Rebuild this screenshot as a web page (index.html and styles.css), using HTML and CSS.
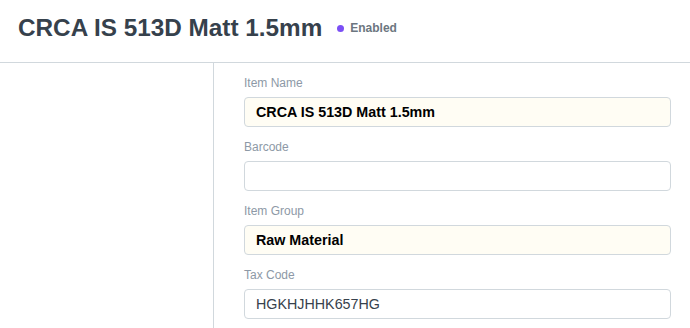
FILE: index.html
```html
<!DOCTYPE html>
<html>
<head>
<meta charset="utf-8">
<link rel="stylesheet" href="styles.css">
</head>
<body>
<header class="page-head">
  <h1 class="title">CRCA IS 513D Matt 1.5mm</h1>
  <span class="indicator"><span class="dot"></span>Enabled</span>
</header>
<main class="layout">
  <aside class="sidebar"></aside>
  <section class="form">
    <div class="field">
      <label class="label">Item Name</label>
      <div class="control filled bold">CRCA IS 513D Matt 1.5mm</div>
    </div>
    <div class="field">
      <label class="label">Barcode</label>
      <div class="control"></div>
    </div>
    <div class="field">
      <label class="label">Item Group</label>
      <div class="control filled bold">Raw Material</div>
    </div>
    <div class="field">
      <label class="label">Tax Code</label>
      <div class="control">HGKHJHHK657HG</div>
    </div>
  </section>
</main>
</body>
</html>
```
FILE: styles.css
```css
* { box-sizing: border-box; }
html, body {
  margin: 0;
  background: #ffffff;
  font-family: "Liberation Sans", Arial, sans-serif;
}
.page-head {
  display: flex;
  align-items: center;
  padding: 12px 18px 18px;
  border-bottom: 1px solid #d1d8dd;
  height: 63px;
}
.title {
  margin: 0;
  font-size: 24.3px;
  line-height: 32px;
  font-weight: 700;
  color: #36414c;
}
.indicator {
  display: inline-flex;
  align-items: center;
  margin-left: 15px;
  font-size: 12px;
  font-weight: 700;
  color: #6c7680;
}
.dot {
  width: 7px;
  height: 7px;
  border-radius: 50%;
  background: #7b4ff5;
  margin-right: 6px;
}
.layout {
  display: grid;
  grid-template-columns: 214px 1fr;
  height: 265px;
}
.sidebar {
  border-right: 1px solid #d1d8dd;
}
.form {
  padding: 11px 19px 0 30px;
}
.field {
  margin-bottom: 11px;
}
.label {
  display: block;
  font-size: 12px;
  line-height: 18px;
  color: #8d99a6;
  margin-bottom: 5px;
}
.control {
  height: 30px;
  border: 1px solid #d1d8dd;
  border-radius: 4px;
  padding: 0 11px;
  font-size: 14.3px;
  line-height: 28px;
  color: #36414c;
  background: #ffffff;
}
.control.filled {
  background: #fffdf4;
}
.control.bold {
  font-weight: 700;
  color: #000000;
}
```
